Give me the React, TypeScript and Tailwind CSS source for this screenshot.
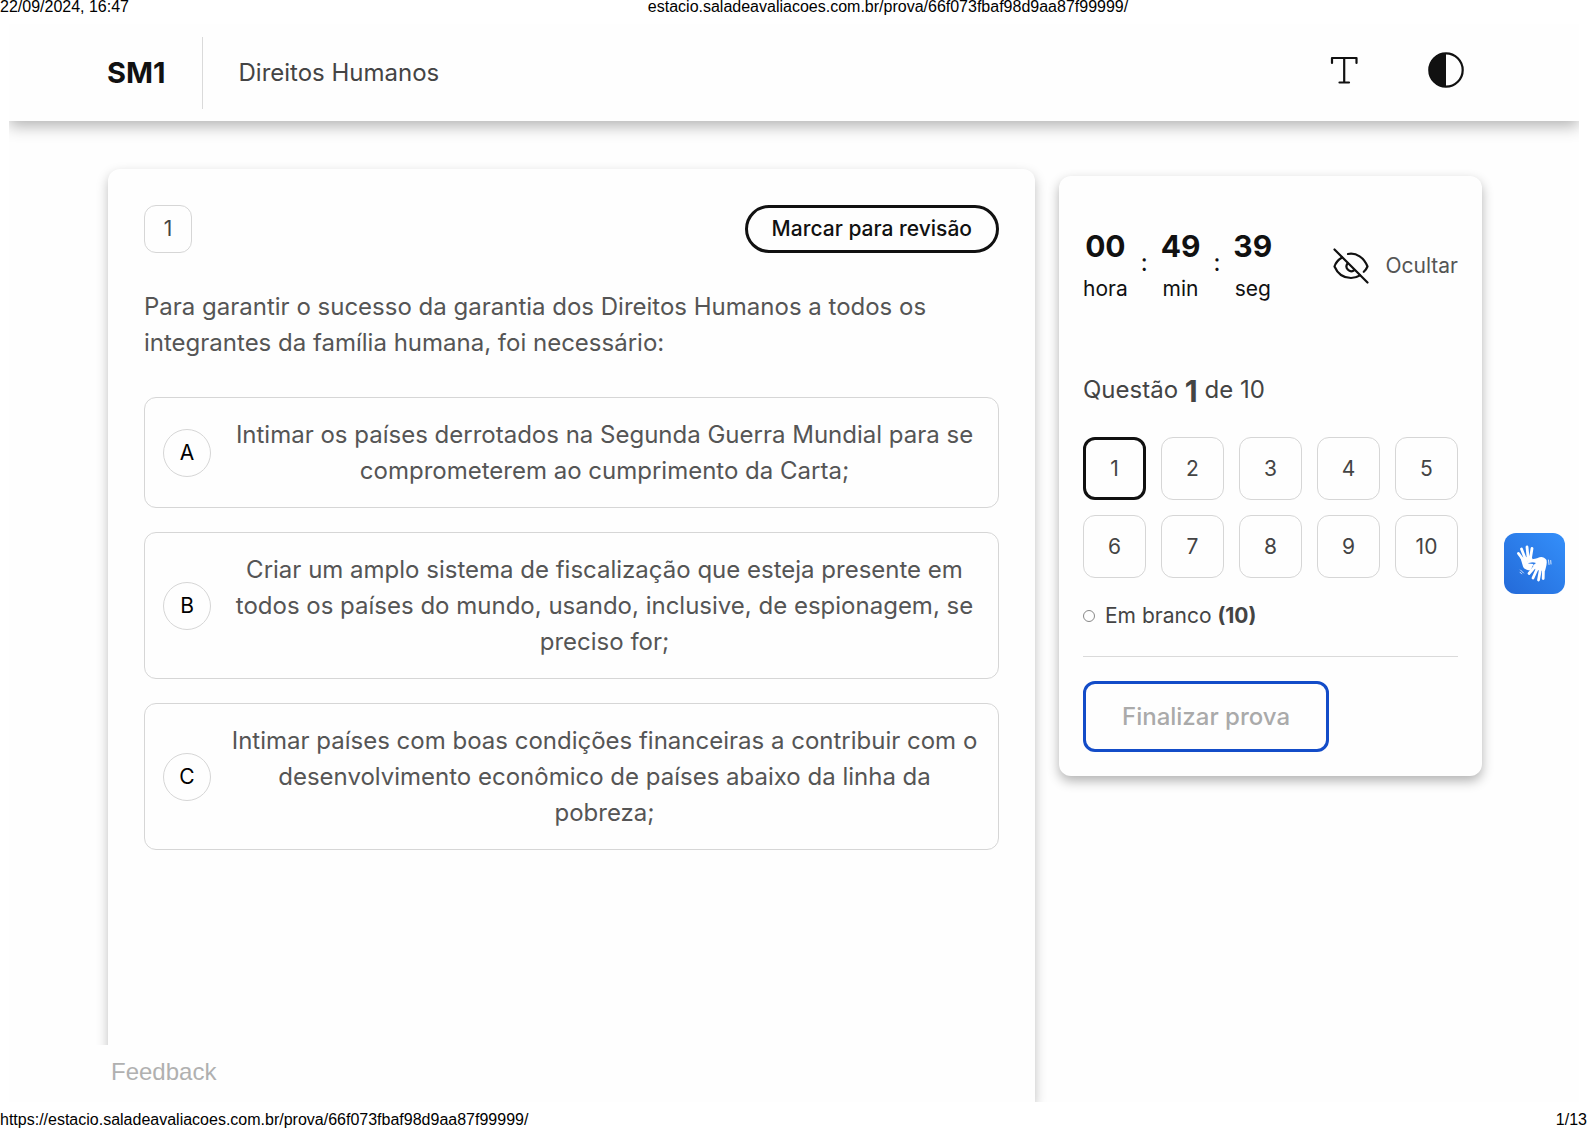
import React, { useState } from 'react';

const options = [
  {
    letter: 'A',
    text: 'Intimar os países derrotados na Segunda Guerra Mundial para se comprometerem ao cumprimento da Carta;',
  },
  {
    letter: 'B',
    text: 'Criar um amplo sistema de fiscalização que esteja presente em todos os países do mundo, usando, inclusive, de espionagem, se preciso for;',
  },
  {
    letter: 'C',
    text: 'Intimar países com boas condições financeiras a contribuir com o desenvolvimento econômico de países abaixo da linha da pobreza;',
  },
];

const timer = [
  { value: '00', label: 'hora' },
  { value: '49', label: 'min' },
  { value: '39', label: 'seg' },
];

const questions = [1, 2, 3, 4, 5, 6, 7, 8, 9, 10];

function TextSizeIcon() {
  return (
    <svg className="w-9 h-9" viewBox="0 0 36 36" fill="none" stroke="currentColor" strokeWidth={2.2} strokeLinecap="round" strokeLinejoin="round">
      <path d="M6 11V6h24.500v5M18.200 6v24.500M13.500 30.500h9.500" />
    </svg>
  );
}

function ContrastIcon() {
  return (
    <svg className="w-9 h-9" viewBox="0 0 36 36" fill="none">
      <circle cx="18" cy="18" r="16.7" stroke="currentColor" strokeWidth={2.2} />
      <path d="M18 1a17 17 0 0 0 0 34z" fill="currentColor" />
    </svg>
  );
}

function EyeOffIcon() {
  return (
    <svg className="w-9 h-9" viewBox="0 0 36 36" fill="none" stroke="currentColor" strokeWidth={2.2} strokeLinecap="round" strokeLinejoin="round">
      <path d="M1.500 1.500l33 33" />
      <path d="M9 9.500C5 12 2.500 15 1.500 18.500c3 7 9 11.500 16.500 11.500 3.500 0 6.500-1 9-2.600" />
      <path d="M15 6c8.500-1.500 16 3.500 19.500 12.500-.8 2-2 3.700-3.700 5.300" />
      <path d="M14.500 15.500a4.800 4.800 0 0 0 6.300 7" />
    </svg>
  );
}

function SignLanguageIcon() {
  return (
    <svg className="w-[54px] h-[54px]" viewBox="0 0 54 54" fill="none" strokeLinecap="round" strokeLinejoin="round">
      {/* back hand, fingers up */}
      <path d="M16 24L10.500 16.500M17 21L13.500 12M20 20L19 10M22.500 21L24 11.500" stroke="#fff" strokeWidth={2.8} />
      <path d="M12.500 21L23 19.500l2 3-5.500 1.500 1 2.500 5 .5-3 6.500c-3.500 0-6.500-1.500-7.500-4z" fill="#fff" />
      {/* front hand, fingers down */}
      <path d="M20.500 24.500l8-1.500" stroke="#fff" strokeWidth={2.8} />
      <path d="M27.500 22.500c3-3 8-4 11 .5.800 3-.5 7-1.500 11l-9-1-3-4.500 3-2.500-4-1z" fill="#fff" />
      <path d="M27.500 29l-6.500 7.500M29.500 31l-4.500 10M32.500 32l-2 11M35.500 31l-.3 10.500" stroke="#fff" strokeWidth={2.8} />
      {/* movement marks */}
      <path d="M40.500 23l.5 4.500M42.700 23.500l.3 3.500M12.500 33l3 3M12 35.200l1.700 1.700" stroke="#fff" strokeWidth={1} opacity={0.8} />
    </svg>
  );
}

export default function App() {
  const [selected, setSelected] = useState('');

  return (
    <div className="relative min-h-screen flex flex-col bg-white font-['Inter',sans-serif] text-[#111]">
      <div className="flex h-6 text-base leading-[14px] text-black font-['Liberation_Sans',sans-serif]">
        <span>22/09/2024, 16:47</span>
        <span className="flex-1 pl-15 text-center">estacio.saladeavaliacoes.com.br/prova/66f073fbaf98d9aa87f99999/</span>
      </div>

      <div className="relative flex-1 flex flex-col ml-[9px] mr-2 overflow-hidden bg-[#fefefe]">
        <header className="flex items-center h-[97px] pl-[98px] pr-[115px] shadow-[0_5px_15px_rgba(0,0,0,0.3)]">
          <h1 className="pr-9 text-[29px] font-bold">SM1</h1>
          <p className="flex items-center h-[72px] pl-9 border-l border-[#dadada] text-2xl text-[#444]">Direitos Humanos</p>
          <div className="flex-1 flex justify-end gap-[66px] pb-1.5">
            <button type="button" aria-label="Tamanho do texto">
              <TextSizeIcon />
            </button>
            <button type="button" aria-label="Contraste">
              <ContrastIcon />
            </button>
          </div>
        </header>

        <main className="flex-1 flex gap-6 pt-12 pl-[99px] pr-[97px]">
          <section className="flex-1 p-9 rounded-t-xl bg-[#fefefe] shadow-[0_5px_12px_rgba(0,0,0,0.25)]">
            <div className="flex items-center justify-between">
              <span className="flex items-center justify-center w-12 h-12 border border-[#d6d6d6] rounded-xl text-[21px] text-[#444]">1</span>
              <button type="button" className="h-12 px-6 border-3 border-[#111] rounded-full text-[21px] font-medium">
                Marcar para revisão
              </button>
            </div>

            <p className="mt-9 text-2xl leading-9 text-[#555]">
              Para garantir o sucesso da garantia dos Direitos Humanos a todos os integrantes da família humana, foi necessário:
            </p>

            <div className="flex flex-col gap-6 mt-9">
              {options.map((option) => (
                <button
                  key={option.letter}
                  type="button"
                  aria-pressed={selected === option.letter}
                  onClick={() => setSelected(option.letter)}
                  className="flex items-center gap-[18px] px-[18px] pt-[19px] pb-[18px] border border-[#d6d6d6] rounded-xl"
                >
                  <span className="shrink-0 flex items-center justify-center w-12 h-12 border border-[#d6d6d6] rounded-full text-[21px] text-black">
                    {option.letter}
                  </span>
                  <span className="flex-1 text-2xl leading-9 text-[#555]">{option.text}</span>
                </button>
              ))}
            </div>
          </section>

          <aside className="self-start w-[423px] mt-[7px] p-6 rounded-xl bg-[#fefefe] shadow-[0_5px_12px_rgba(0,0,0,0.3)]">
            <div className="flex items-center justify-between pt-6">
              <div className="flex items-center">
                {timer.map((part, i) => (
                  <React.Fragment key={part.label}>
                    {i > 0 && <span className="px-[13px] pb-2 text-2xl">:</span>}
                    <div className="flex flex-col items-center">
                      <span className="text-[30px] leading-[44px] font-bold">{part.value}</span>
                      <span className="text-[21px] leading-[42px] text-[#111]">{part.label}</span>
                    </div>
                  </React.Fragment>
                ))}
              </div>
              <button type="button" className="flex items-center gap-4 pb-0.5">
                <EyeOffIcon />
                <span className="text-[21px] text-[#555]">Ocultar</span>
              </button>
            </div>

            <h2 className="mt-[62px] text-2xl leading-9 text-[#444]">
              Questão <strong className="align-middle text-[30px] leading-9 font-bold">1</strong> de 10
            </h2>

            <div className="grid grid-cols-5 gap-[15px] mt-7">
              {questions.map((n) => (
                <button
                  key={n}
                  type="button"
                  className={`h-[63px] rounded-xl text-[21px] text-[#444] ${n === 1 ? 'border-3 border-[#111]' : 'border border-[#d6d6d6]'}`}
                >
                  {n}
                </button>
              ))}
            </div>

            <div className="flex items-center gap-[10px] mt-[22px] pb-6 border-b border-[#dadada] text-[21px] leading-8 text-[#444]">
              <span className="w-3 h-3 border border-[#888] rounded-full" />
              <p>
                Em branco <strong className="font-bold">(10)</strong>
              </p>
            </div>

            <button type="button" disabled className="h-[71px] mt-6 px-9 border-3 border-[#134cc8] rounded-xl text-2xl font-medium text-[#aaa]">
              Finalizar prova
            </button>
          </aside>
        </main>

        <div className="absolute bottom-0 left-0 w-[216px] h-[57px] pl-[102px] bg-[#fefefe] text-2xl leading-[54px] text-[#b0b0b0] font-['Liberation_Sans',sans-serif]">
          Feedback
        </div>
      </div>

      <div className="flex items-end justify-between h-[27px] text-base leading-[18px] text-black font-['Liberation_Sans',sans-serif]">
        <span>https://estacio.saladeavaliacoes.com.br/prova/66f073fbaf98d9aa87f99999/</span>
        <span>1/13</span>
      </div>

      <button
        type="button"
        aria-label="Libras"
        className="absolute top-[533px] right-[22px] flex items-center justify-center w-[61px] h-[61px] rounded-xl bg-linear-to-tr from-[#246ad8] to-[#348ffa]"
      >
        <SignLanguageIcon />
      </button>
    </div>
  );
}
